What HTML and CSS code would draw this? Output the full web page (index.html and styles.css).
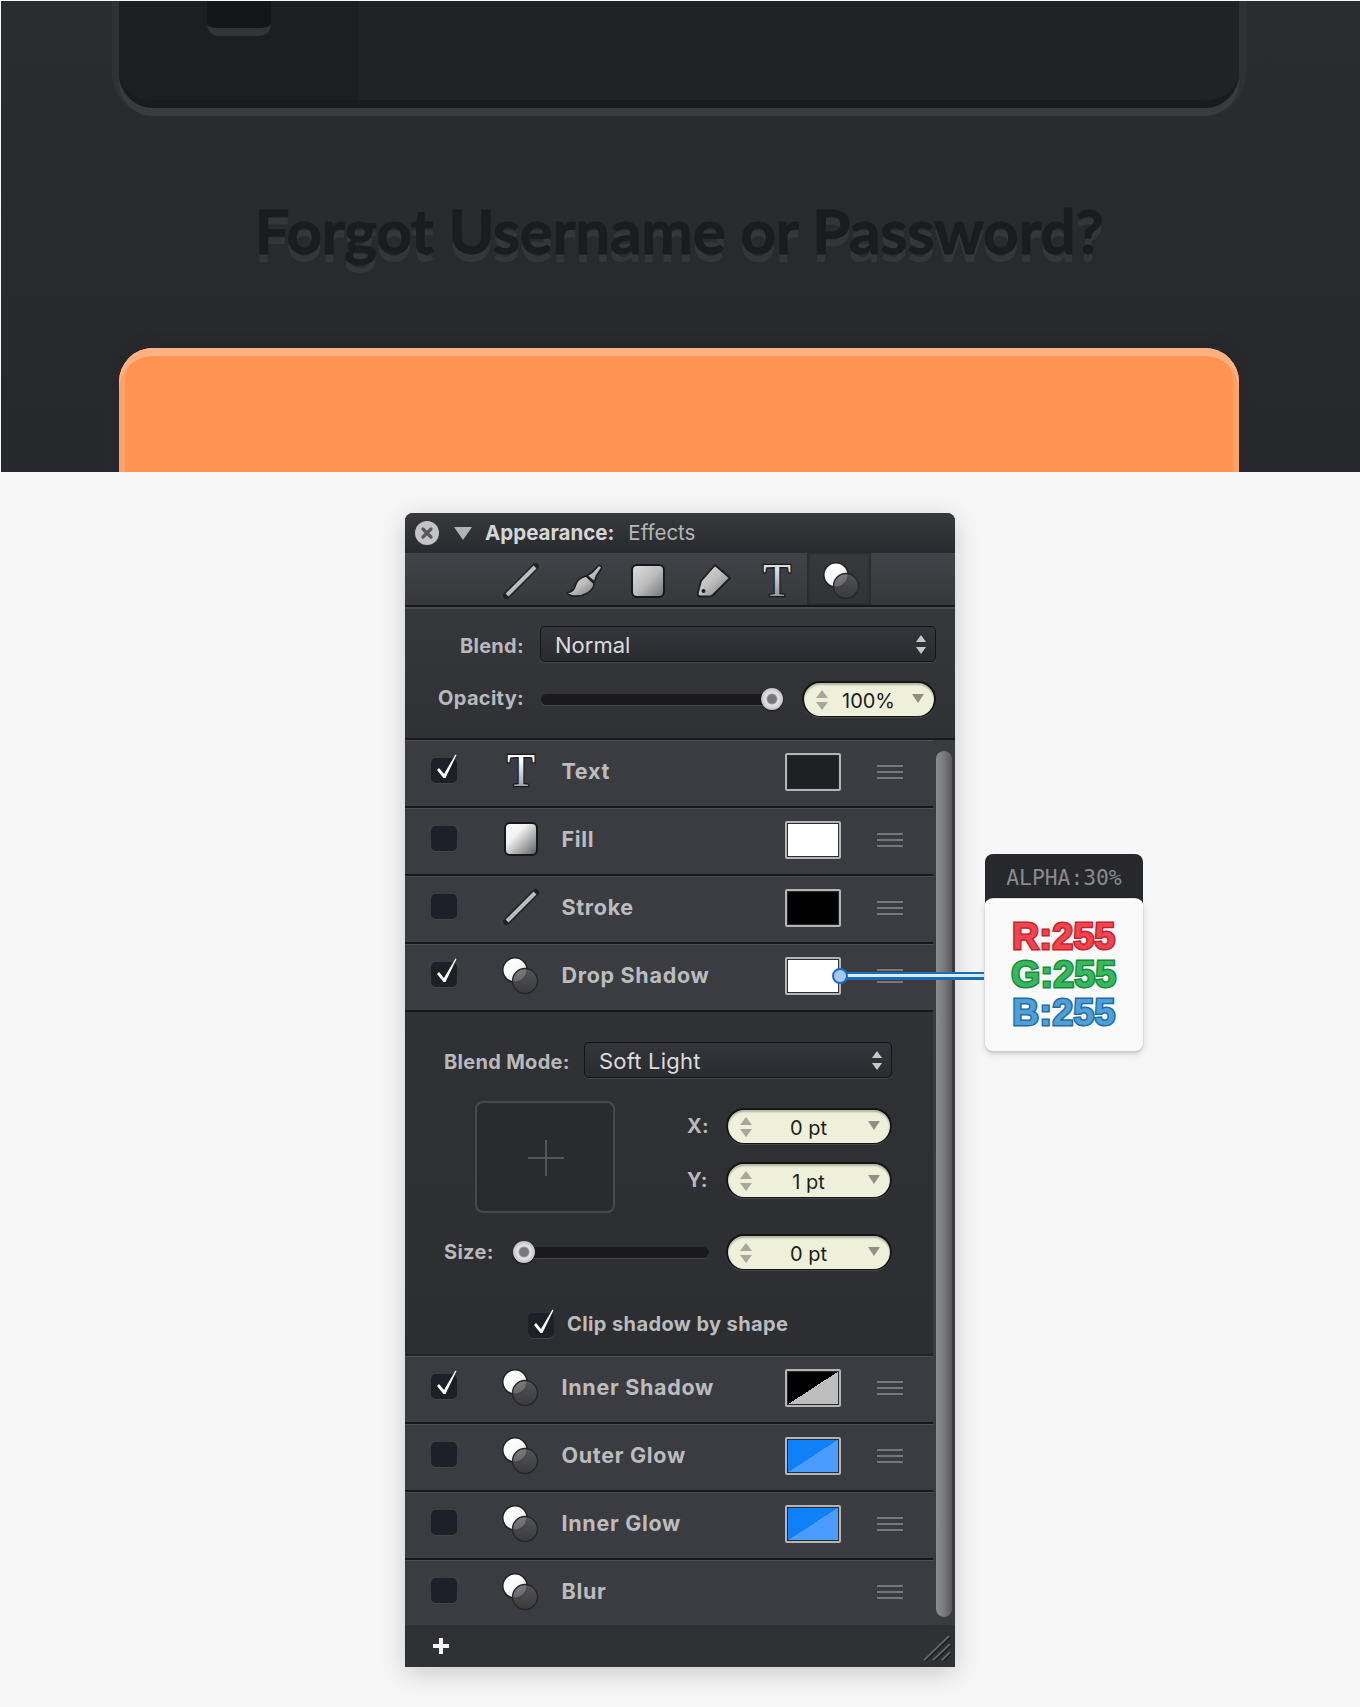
FILE: index.html
```html
<!DOCTYPE html>
<html lang="en">
<head>
    <meta charset="UTF-8">
    <meta name="viewport" content="width=device-width, initial-scale=1.0">
    <title>Appearance Effects</title>
    <link rel="stylesheet" href="styles.css">
</head>
<body>
    <!-- shared icons -->
    <svg class="icon-defs" aria-hidden="true">
        <defs>
            <linearGradient id="gradFill" x1="0" y1="0" x2="1" y2="1">
                <stop offset="0" stop-color="#ffffff"/>
                <stop offset="0.35" stop-color="#f2f2f2"/>
                <stop offset="1" stop-color="#5a5a5a"/>
            </linearGradient>
            <linearGradient id="gradGrey" x1="0" y1="0" x2="1" y2="1">
                <stop offset="0" stop-color="#dedede"/>
                <stop offset="0.5" stop-color="#bdbdbd"/>
                <stop offset="1" stop-color="#727272"/>
            </linearGradient>
            <linearGradient id="gradT" x1="0" y1="0" x2="0" y2="1">
                <stop offset="0.3" stop-color="#ffffff"/>
                <stop offset="1" stop-color="#808080"/>
            </linearGradient>
            <linearGradient id="gradTGrey" x1="0" y1="0" x2="0" y2="1">
                <stop offset="0.3" stop-color="#dcdcdc"/>
                <stop offset="1" stop-color="#7c7c7c"/>
            </linearGradient>
            <linearGradient id="gradWhite" x1="0" y1="0" x2="1" y2="1">
                <stop offset="0" stop-color="#ffffff"/>
                <stop offset="0.5" stop-color="#fafafa"/>
                <stop offset="1" stop-color="#b8b8b8"/>
            </linearGradient>
            <linearGradient id="gradDark" x1="0" y1="0" x2="0" y2="1">
                <stop offset="0" stop-color="#5c5c5e"/>
                <stop offset="1" stop-color="#3a3a3c"/>
            </linearGradient>
            <symbol id="iconCircles" viewBox="0 0 36 38" overflow="visible">
                <circle cx="13" cy="13" r="12.2" fill="url(#gradWhite)" stroke="#222326" stroke-width="1.5"/>
                <circle cx="23" cy="24" r="12.5" fill="url(#gradDark)" fill-opacity="0.78" stroke="#26272a" stroke-width="1.4"/>
            </symbol>
            <symbol id="iconLine" viewBox="0 0 36 36">
                <line x1="3.5" y1="32.5" x2="32.5" y2="3.5" stroke="#202124" stroke-width="7" stroke-linecap="round"/>
                <line x1="4" y1="32" x2="32" y2="4" stroke="#bdbdbd" stroke-width="4"/>
            </symbol>
            <symbol id="iconCheck" viewBox="0 0 26 26" overflow="visible">
                <path d="M6 12 L8 10 L13 16 L24.5 -3.5 L25.5 -3 L14.5 20 L12.5 20 Z" fill="#ffffff"/>
            </symbol>
            <symbol id="iconSquare" viewBox="0 0 36 36">
                <rect x="2" y="2" width="32" height="32" rx="5" fill="url(#gradFill)" stroke="#17181a" stroke-width="2"/>
            </symbol>
        </defs>
    </svg>

    <section class="hero">
        <div class="screen">
            <div class="screen-side"><div class="screen-knob"></div></div>
            <div class="screen-main"></div>
        </div>
        <h1 class="hero-title">Forgot Username or Password?</h1>
        <div class="orange-button"></div>
    </section>

    <div class="panel">
        <header class="title-bar">
            <span class="close-btn">
                <svg viewBox="0 0 24 24" width="24" height="24"><path d="M8 8 L16 16 M16 8 L8 16" stroke="#58585a" stroke-width="3.2" stroke-linecap="round"/></svg>
            </span>
            <span class="collapse-tri"></span>
            <span class="title-main">Appearance:</span>
            <span class="title-sub">Effects</span>
        </header>

        <nav class="toolbar">
            <span class="tool tool-line"><svg width="36" height="36"><use href="#iconLine"/></svg></span>
            <span class="tool tool-brush">
                <svg viewBox="0 0 36 36" width="36" height="36">
                    <path d="M33 2 L36 4.5 L30.5 13 L28.5 19 L21 12.5 L26 9.5 Z" fill="url(#gradGrey)" stroke="#1d1e21" stroke-width="1.6" stroke-linejoin="round"/>
                    <path d="M20 13 L28 20.5 C28 28 18 34 8 33 C4 33 1 31 1 29.5 C7 29.5 8 26 10 21 C12 16 16 14 20 13 Z" fill="url(#gradGrey)" stroke="#1d1e21" stroke-width="1.6" stroke-linejoin="round"/>
                </svg>
            </span>
            <span class="tool tool-square">
                <svg viewBox="0 0 36 36" width="36" height="36"><rect x="2" y="2" width="32" height="32" rx="5" fill="url(#gradGrey)" stroke="#17181a" stroke-width="2"/></svg>
            </span>
            <span class="tool tool-tag">
                <svg viewBox="0 0 36 36" width="36" height="36">
                    <path d="M19 2 L34 15 L17 32 Q15 34 12 33.5 L4 33.5 Q1 33 2 29 L5 18 Z" fill="url(#gradGrey)" stroke="#1d1e21" stroke-width="1.8" stroke-linejoin="round"/>
                    <circle cx="7.5" cy="28" r="2" fill="#1d1e21"/>
                </svg>
            </span>
            <span class="tool tool-text">
                <svg class="t-icon" viewBox="0 0 36 36" width="36" height="36"><text class="t-glyph" x="18" y="33" text-anchor="middle" fill="url(#gradTGrey)">T</text></svg>
            </span>
            <span class="tool tool-active"><svg class="circles-icon" width="36" height="38"><use href="#iconCircles"/></svg></span>
        </nav>

        <div class="props">
            <div class="prop-row">
                <label class="prop-label label-blend">Blend:</label>
                <div class="select select-wide">
                    <span>Normal</span>
                    <span class="updown"><i class="tri tri-up"></i><i class="tri tri-down"></i></span>
                </div>
            </div>
            <div class="prop-row prop-row-opacity">
                <label class="prop-label label-opacity">Opacity:</label>
                <div class="slider slider-opacity"><span class="thumb thumb-end"></span></div>
                <div class="stepper stepper-small">
                    <span class="step-arrows"><i class="tri tri-up"></i><i class="tri tri-down"></i></span>
                    <span class="step-value">100%</span>
                    <i class="tri tri-drop"></i>
                </div>
            </div>
        </div>

        <div class="scroll-area">
            <div class="rows">
                <div class="row">
                    <span class="checkbox"><svg width="26" height="26"><use href="#iconCheck"/></svg></span>
                    <span class="row-icon"><svg class="t-icon" viewBox="0 0 36 36" width="36" height="36"><text class="t-glyph" x="18" y="33" text-anchor="middle" fill="url(#gradT)">T</text></svg></span>
                    <span class="row-label">Text</span>
                    <span class="swatch swatch-dark"></span>
                    <span class="handle"><i></i><i></i><i></i></span>
                </div>
                <div class="row">
                    <span class="checkbox"></span>
                    <span class="row-icon"><svg width="36" height="36"><use href="#iconSquare"/></svg></span>
                    <span class="row-label">Fill</span>
                    <span class="swatch swatch-white"></span>
                    <span class="handle"><i></i><i></i><i></i></span>
                </div>
                <div class="row">
                    <span class="checkbox"></span>
                    <span class="row-icon"><svg width="36" height="36"><use href="#iconLine"/></svg></span>
                    <span class="row-label">Stroke</span>
                    <span class="swatch swatch-black"></span>
                    <span class="handle"><i></i><i></i><i></i></span>
                </div>
                <div class="row">
                    <span class="checkbox"><svg width="26" height="26"><use href="#iconCheck"/></svg></span>
                    <span class="row-icon"><svg class="circles-icon" width="36" height="38"><use href="#iconCircles"/></svg></span>
                    <span class="row-label">Drop Shadow</span>
                    <span class="swatch swatch-white"></span>
                    <span class="handle"><i></i><i></i><i></i></span>
                </div>

                <div class="detail">
                    <div class="detail-blend">
                        <label class="prop-label detail-label">Blend Mode:</label>
                        <div class="select select-mode">
                            <span>Soft Light</span>
                            <span class="updown"><i class="tri tri-up"></i><i class="tri tri-down"></i></span>
                        </div>
                    </div>
                    <div class="detail-offset">
                        <div class="offset-box"><i class="cross-h"></i><i class="cross-v"></i></div>
                        <div class="offset-fields">
                            <div class="offset-field">
                                <label class="prop-label axis-label">X:</label>
                                <div class="stepper">
                                    <span class="step-arrows"><i class="tri tri-up"></i><i class="tri tri-down"></i></span>
                                    <span class="step-value">0 pt</span>
                                    <i class="tri tri-drop"></i>
                                </div>
                            </div>
                            <div class="offset-field">
                                <label class="prop-label axis-label">Y:</label>
                                <div class="stepper">
                                    <span class="step-arrows"><i class="tri tri-up"></i><i class="tri tri-down"></i></span>
                                    <span class="step-value">1 pt</span>
                                    <i class="tri tri-drop"></i>
                                </div>
                            </div>
                        </div>
                    </div>
                    <div class="detail-size">
                        <label class="prop-label size-label">Size:</label>
                        <div class="slider slider-size"><span class="thumb thumb-start"></span></div>
                        <div class="stepper">
                            <span class="step-arrows"><i class="tri tri-up"></i><i class="tri tri-down"></i></span>
                            <span class="step-value">0 pt</span>
                            <i class="tri tri-drop"></i>
                        </div>
                    </div>
                    <div class="detail-clip">
                        <span class="checkbox"><svg width="26" height="26"><use href="#iconCheck"/></svg></span>
                        <span class="clip-label">Clip shadow by shape</span>
                    </div>
                </div>

                <div class="row">
                    <span class="checkbox"><svg width="26" height="26"><use href="#iconCheck"/></svg></span>
                    <span class="row-icon"><svg class="circles-icon" width="36" height="38"><use href="#iconCircles"/></svg></span>
                    <span class="row-label">Inner Shadow</span>
                    <span class="swatch swatch-split-black"></span>
                    <span class="handle"><i></i><i></i><i></i></span>
                </div>
                <div class="row">
                    <span class="checkbox"></span>
                    <span class="row-icon"><svg class="circles-icon" width="36" height="38"><use href="#iconCircles"/></svg></span>
                    <span class="row-label">Outer Glow</span>
                    <span class="swatch swatch-split-blue"></span>
                    <span class="handle"><i></i><i></i><i></i></span>
                </div>
                <div class="row">
                    <span class="checkbox"></span>
                    <span class="row-icon"><svg class="circles-icon" width="36" height="38"><use href="#iconCircles"/></svg></span>
                    <span class="row-label">Inner Glow</span>
                    <span class="swatch swatch-split-blue"></span>
                    <span class="handle"><i></i><i></i><i></i></span>
                </div>
                <div class="row row-last">
                    <span class="checkbox"></span>
                    <span class="row-icon"><svg class="circles-icon" width="36" height="38"><use href="#iconCircles"/></svg></span>
                    <span class="row-label">Blur</span>
                    <span class="handle"><i></i><i></i><i></i></span>
                </div>
            </div>
            <div class="scroll-track"><div class="scroll-thumb"></div></div>
        </div>

        <footer class="panel-footer">
            <span class="add-btn"></span>
            <svg class="resize-grip" viewBox="0 0 28 26" width="28" height="26">
                <path d="M1 25 L26 1 M10 25 L27 9 M19 25 L27 17" stroke="#6b6c70" stroke-width="1.6"/>
                <path d="M3 26 L28 2 M12 26 L28 11 M21 26 L28 19" stroke="#1d1e21" stroke-width="1.2"/>
            </svg>
        </footer>

        <!-- colour callout pinned on the drop shadow swatch -->
        <div class="connector"><span class="connector-dot"></span></div>
        <div class="callout">
            <div class="callout-head">ALPHA:30%</div>
            <div class="callout-body">
                <div class="rgb rgb-r">R:255</div>
                <div class="rgb rgb-g">G:255</div>
                <div class="rgb rgb-b">B:255</div>
            </div>
        </div>
    </div>
</body>
</html>
```
FILE: styles.css
```css
* {
    box-sizing: border-box;
}
html, body {
    margin: 0;
    padding: 0;
}
body {
    height: 1707px;
    overflow: hidden;
    background-color: #f6f6f7;
    font-family: Inter, "Liberation Sans", sans-serif;
}
i {
    display: block;
}
.icon-defs {
    position: absolute;
    width: 0;
    height: 0;
}
.t-icon, .circles-icon {
    overflow: visible;
}
.circles-icon {
    margin-left: -1.5px;
}
.t-glyph {
    font-family: "Liberation Serif", serif;
    font-size: 46px;
    stroke: #1a1b1d;
    stroke-width: 2.6px;
    paint-order: stroke;
}

/* dark screenshot part */
.hero {
    height: 471px;
    margin: 1px 0 0 1px;
    padding: 0 121px 0 118px;
    overflow: hidden;
    background: linear-gradient(#2b2c30, #27282c);
}
.screen {
    display: flex;
    height: 107px;
    overflow: hidden;
    border-radius: 0 0 34px 34px;
    background-color: #212226;
    box-shadow: 0 8px 0 #3a3b3f, 0 0 0 7px #303135;
    border-bottom: 8px solid #1a1b1e;
}
.screen-side {
    width: 240px;
    padding-left: 88px;
    background-color: #1d1e21;
}
.screen-knob {
    width: 64px;
    height: 35px;
    border-bottom: 8px solid #333438;
    border-radius: 0 0 12px 12px;
    background-color: #151618;
}
.screen-main {
    flex: 1;
}
.hero-title {
    margin: 87px 0 0;
    height: 70px;
    font-family: Lato, "Liberation Sans", sans-serif;
    font-size: 62px;
    font-weight: bold;
    line-height: 70px;
    text-align: center;
    white-space: nowrap;
    letter-spacing: -0.3px;
    color: #1b1c1f;
    -webkit-text-stroke: 0.8px #1b1c1f;
    text-shadow: 0 8px 0 #35363a;
}
.orange-button {
    height: 200px;
    margin-top: 83px;
    border-radius: 34px 34px 0 0;
    background-color: #ff9351;
    box-shadow: 0 -8px 8px #25282c, inset 0 8px 0 #ffb183, inset 6px 0 0 #ffa268, inset -6px 0 0 #ffa268;
}

/* panel */
.panel {
    position: relative;
    width: 550px;
    height: 1154px;
    margin: 41px 0 0 405px;
    border-radius: 8px 8px 0 0;
    background-color: #2f3034;
    box-shadow: 0 6px 24px rgba(0, 0, 0, 0.18);
}
.title-bar {
    display: flex;
    align-items: center;
    height: 40px;
    padding-left: 10px;
    border-radius: 8px 8px 0 0;
    background: linear-gradient(#38393d, #292a2e);
}
.close-btn {
    width: 24px;
    height: 24px;
    border-radius: 50%;
    background-color: #c4c4c6;
}
.close-btn svg {
    display: block;
}
.collapse-tri {
    width: 0;
    height: 0;
    margin-left: 15px;
    border-left: 9px solid transparent;
    border-right: 9px solid transparent;
    border-top: 13px solid #b2b2b4;
}
.title-main {
    margin-left: 13px;
    padding-bottom: 2px;
    font-size: 20.5px;
    font-weight: 700;
    color: #d6d6d8;
}
.title-sub {
    margin-left: 14px;
    padding-bottom: 2px;
    font-size: 20.5px;
    color: #b6b6b8;
}
.toolbar {
    display: flex;
    align-items: flex-start;
    height: 54px;
    padding-left: 98px;
    border-bottom: 2px solid #19191c;
    background: linear-gradient(#424348, #37383c);
}
.tool {
    display: flex;
    align-items: center;
    justify-content: center;
    width: 36px;
    height: 36px;
    margin-top: 10px;
    margin-right: 27px;
}
.tool-brush {
    margin-right: 28px;
}
.tool-square {
    margin-right: 30px;
}
.tool-text {
    margin-right: 12px;
}
.tool-active {
    width: 64px;
    height: 52px;
    margin: 0;
    padding: 4px 0 0 6px;
    background: linear-gradient(#38393c, #323336);
    box-shadow: inset 2px 0 3px #2a2b2e, inset -2px 0 3px #2a2b2e;
}

.props {
    height: 133px;
    padding-top: 17px;
    border-top: 2px solid #48494d;
    border-bottom: 2px solid #19191c;
    background: linear-gradient(#36373b, #303135);
}
.prop-row {
    display: flex;
    align-items: center;
    height: 36px;
}
.prop-row-opacity {
    margin-top: 19px;
}
.prop-label {
    width: 119px;
    font-size: 20px;
    font-weight: 700;
    text-align: right;
    letter-spacing: 0.3px;
    white-space: nowrap;
    color: #b9b9bb;
}
.label-blend {
    margin-top: 3px;
}
.label-opacity {
    margin-top: -2px;
}
.select {
    display: flex;
    align-items: center;
    justify-content: space-between;
    height: 36px;
    padding: 2px 9px 0 14px;
    border: 1px solid #131417;
    border-radius: 5px;
    background: linear-gradient(#35363b, #2a2b2f);
    box-shadow: 0 1px 0 #46474b;
    font-size: 22px;
    color: #dcdcde;
}
.select-wide {
    width: 396px;
    margin-left: 16px;
}
.updown {
    display: flex;
    flex-direction: column;
    gap: 5px;
    margin-top: -2px;
}
.tri {
    width: 0;
    height: 0;
    border-left: 5px solid transparent;
    border-right: 5px solid transparent;
}
.tri-up {
    border-bottom: 7px solid #c8c8ca;
}
.tri-down {
    border-top: 7px solid #c8c8ca;
}

.slider {
    position: relative;
    height: 11px;
    border-radius: 6px;
    background-color: #1a1a1d;
    box-shadow: 0 1px 0 #47484c;
}
.slider-opacity {
    width: 231px;
    margin-left: 17px;
}
.slider-size {
    width: 185px;
    margin-left: 32px;
}
.thumb {
    position: absolute;
    top: -6px;
    width: 22px;
    height: 22px;
    border-radius: 50%;
    background: radial-gradient(circle, #77787b 0 4px, #99999b 5px, #e6e6e8 6px, #c2c2c4 11px);
    box-shadow: 0 1px 2px rgba(0, 0, 0, 0.6);
}
.thumb-end {
    right: -11px;
}
.thumb-start {
    left: -11px;
}

.stepper {
    position: relative;
    display: flex;
    align-items: center;
    width: 166px;
    height: 36px;
    padding: 0 10px 0 12px;
    border: 2px solid #141518;
    border-bottom-width: 1px;
    border-radius: 18px;
    background-color: #eef0d9;
    box-shadow: inset 0 2px 2px rgba(0, 0, 0, 0.25), 0 1px 0 #46474b;
    font-size: 20px;
    color: #1c1c1c;
}
.stepper-small {
    width: 134px;
    margin-left: 30px;
}
.step-arrows {
    display: flex;
    flex-direction: column;
    gap: 4px;
}
.step-arrows .tri {
    border-left-width: 6px;
    border-right-width: 6px;
}
.step-arrows .tri-up {
    border-bottom: 8px solid #a6a89b;
}
.step-arrows .tri-down {
    border-top: 8px solid #a6a89b;
}
.step-value {
    flex: 1;
    padding: 2px 3px 0 0;
    text-align: center;
}
.tri-drop {
    border-left-width: 6px;
    border-right-width: 6px;
    border-top: 9px solid #8e9084;
    margin-top: -3px;
}
.stepper-small .step-value {
    text-align: left;
    padding-left: 14px;
}

/* rows and scrollbar */
.scroll-area {
    display: flex;
    height: 885px;
}
.rows {
    width: 528px;
}
.row {
    display: flex;
    align-items: center;
    height: 68px;
    padding: 0 30px 3px 26px;
    border-top: 1px solid #4d4e52;
    border-bottom: 2px solid #17181a;
    background-color: #3b3c41;
}
.row-last {
    height: 65px;
    border-bottom: none;
    padding-bottom: 2px;
}
.checkbox {
    flex: none;
    width: 26px;
    height: 25px;
    border-radius: 5px;
    background-color: #1e1f27;
    box-shadow: 0 1px 0 #45464a;
}
.row .checkbox {
    margin-top: -3px;
}
.checkbox svg {
    display: block;
    overflow: visible;
}
.row-icon {
    flex: none;
    width: 36px;
    height: 36px;
    margin-top: -3px;
    margin-left: 46px;
}
.row-icon svg {
    display: block;
}
.row-label {
    flex: 1;
    margin-left: 22.5px;
    margin-bottom: 2px;
    font-size: 21.5px;
    font-weight: 700;
    letter-spacing: 0.7px;
    color: #bcbcbe;
}
.swatch {
    flex: none;
    width: 56px;
    height: 38px;
    border: 2px solid #b5b5b7;
    outline: 1px solid #2a2b2e;
    outline-offset: -3px;
    border-radius: 2px;
    margin-right: 36px;
}
.swatch-dark {
    background-color: #1e2124;
}
.swatch-white {
    background-color: #ffffff;
}
.swatch-black {
    background-color: #000000;
}
.swatch-split-black {
    background: linear-gradient(to bottom right, #000000 50%, #bdbdbd 50%);
}
.swatch-split-blue {
    background: linear-gradient(to bottom right, #0f80f8 50%, #4a9cff 50%);
}
.handle {
    flex: none;
    display: flex;
    flex-direction: column;
    gap: 4px;
    width: 26px;
}
.handle i {
    height: 2px;
    background-color: #77787b;
}

.detail {
    height: 344px;
    padding-top: 30px;
    background: linear-gradient(#303135, #2d2e31);
    border-bottom: 2px solid #232427;
}
.detail-blend {
    display: flex;
    align-items: center;
    height: 36px;
    padding-left: 39px;
}
.detail-label {
    width: 126px;
    margin-top: 4px;
    text-align: left;
}
.select-mode {
    width: 308px;
    margin-left: 14px;
    letter-spacing: 0.2px;
}
.detail-offset {
    display: flex;
    margin-top: 23px;
    padding-left: 70px;
}
.offset-box {
    position: relative;
    width: 140px;
    height: 112px;
    border: 2px solid #48494d;
    border-radius: 8px;
    background-color: #2a2b2e;
}
.cross-h {
    position: absolute;
    left: 51px;
    top: 54px;
    width: 36px;
    height: 2px;
    background-color: #55565a;
}
.cross-v {
    position: absolute;
    left: 68px;
    top: 37px;
    width: 2px;
    height: 36px;
    background-color: #55565a;
}
.offset-fields {
    display: flex;
    flex-direction: column;
    gap: 18px;
    margin-top: 7px;
    margin-left: 72px;
}
.offset-field {
    display: flex;
    align-items: center;
}
.axis-label {
    width: 39px;
    text-align: left;
}
.detail-size {
    display: flex;
    align-items: center;
    margin-top: 21px;
    padding-left: 39px;
}
.size-label {
    width: 48px;
    text-align: left;
}
.detail-size .stepper {
    margin-left: 17px;
}
.detail-clip {
    display: flex;
    align-items: center;
    margin-top: 42px;
    padding-left: 123px;
}
.clip-label {
    margin-left: 13px;
    margin-bottom: 2px;
    font-size: 20px;
    font-weight: 700;
    letter-spacing: 0.4px;
    color: #bcbcbe;
}

.scroll-track {
    width: 22px;
    padding: 11px 3px 8px 3px;
    background-color: #3a3b3f;
}
.scroll-thumb {
    height: 100%;
    border-radius: 8px;
    background: linear-gradient(to right, #8c8c8e, #7a7a7c 50%, #5a5a5c);
}

.panel-footer {
    display: flex;
    align-items: center;
    justify-content: space-between;
    height: 42px;
    padding: 0 4px 0 28px;
    background-color: #303135;
}
.add-btn {
    position: relative;
    width: 16px;
    height: 16px;
    background: linear-gradient(#f4f4f6, #f4f4f6) center / 16px 4px no-repeat, linear-gradient(#f4f4f6, #f4f4f6) center / 4px 16px no-repeat;
}
.resize-grip {
    margin-top: 4px;
}

/* callout */
.connector {
    position: absolute;
    left: 435px;
    top: 459px;
    width: 145px;
    height: 8px;
    background: linear-gradient(#1a6db5 0 2.5px, #dcecfb 2.5px 5.5px, #1a6db5 5.5px);
}
.connector-dot {
    position: absolute;
    left: -8px;
    top: -4px;
    width: 16px;
    height: 16px;
    border: 2.5px solid #1b6fb8;
    border-radius: 50%;
    background-color: #a7c8f2;
}
.callout {
    position: absolute;
    left: 580px;
    top: 341px;
    width: 158px;
}
.callout-head {
    height: 50px;
    padding-top: 11px;
    border-radius: 8px 8px 0 0;
    background-color: #27282c;
    font-family: "DejaVu Sans Mono", monospace;
    font-size: 21.3px;
    text-align: center;
    color: #8a8b8f;
}
.callout-body {
    display: flex;
    flex-direction: column;
    align-items: center;
    height: 152px;
    margin-top: -5px;
    padding-top: 19px;
    border-radius: 8px;
    background-color: #f9f9fa;
    box-shadow: inset 0 3px 0 #ffffff, 0 2px 0 #cfcfd1, 0 0 0 1px #dcdcde, 0 3px 6px rgba(0, 0, 0, 0.15);
}
.rgb {
    height: 38px;
    font-family: "Liberation Sans", sans-serif;
    font-size: 37px;
    font-weight: bold;
    line-height: 38px;
    letter-spacing: 0.5px;
    white-space: nowrap;
    paint-order: stroke fill;
}
.rgb-r {
    color: #f0444e;
    -webkit-text-stroke: 3px #c9212d;
}
.rgb-g {
    color: #38b85e;
    -webkit-text-stroke: 3px #168c3a;
}
.rgb-b {
    color: #4f9fd8;
    -webkit-text-stroke: 3px #1f6ca6;
}
```
